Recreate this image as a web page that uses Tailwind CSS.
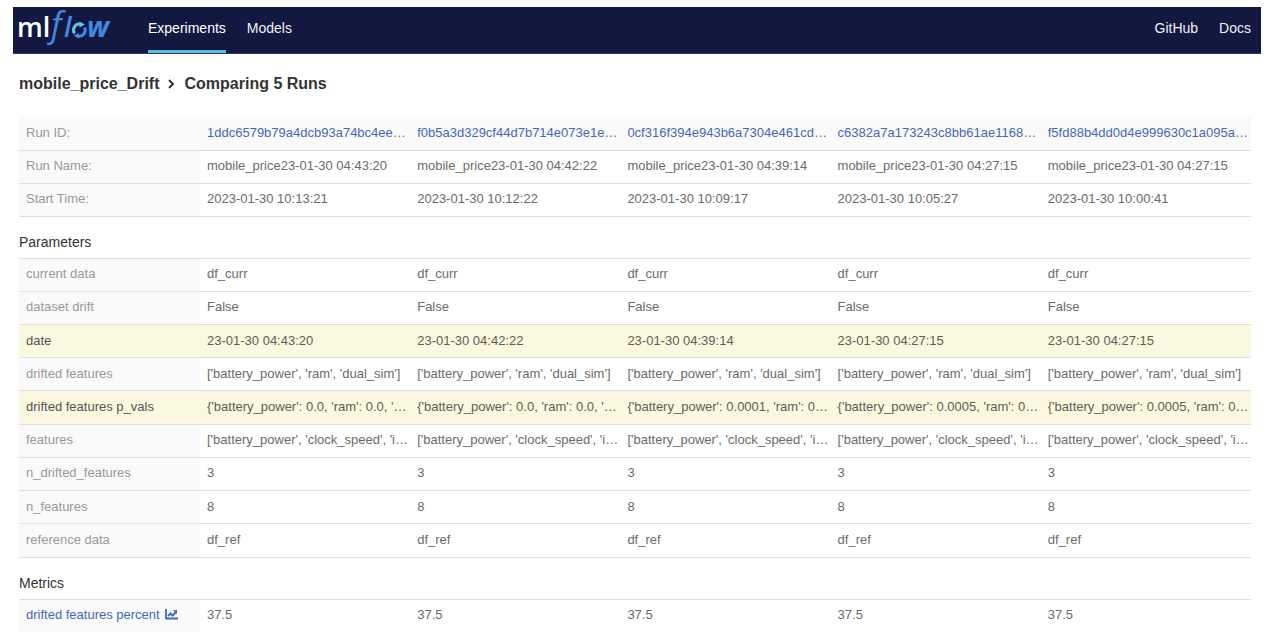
<!DOCTYPE html>
<html lang="en">
<head>
<meta charset="utf-8">
<meta name="viewport" content="width=device-width, initial-scale=1">
<title>Comparing 5 Runs - MLflow</title>
<script src="https://cdn.jsdelivr.net/npm/@tailwindcss/browser@4"></script>
</head>
<body class="bg-white pt-[7px] pl-[13px] pr-[19px] font-['Liberation_Sans',Arial,sans-serif] text-[13px] leading-5 text-[#6b6b6b]">
<header class="flex h-[47px] border-b border-[#34395c] bg-[#12183f] pl-1.5 pr-2.5 text-sm text-[#f0f0f4]">
  <a href="#" aria-label="mlflow" class="block w-[129px]">
    <svg class="overflow-visible" width="96" height="46" viewBox="0 0 96 46" aria-hidden="true">
      <g font-family="Open Sans, Noto Sans, sans-serif">
        <text x="-2" y="30" font-size="27" font-weight="600" fill="#ffffff">ml</text>
        <g fill="#4088e2" font-style="italic">
          <text x="32" y="30" font-size="34">f</text>
          <text x="45" y="30" font-size="27" font-weight="600">l</text>
          <text x="68" y="30" font-size="28" font-weight="700">w</text>
        </g>
      </g>
      <g fill="none" stroke-width="3">
        <path d="M55.500 26.500A6 6 0 0 1 61.500 17.200" stroke="#5bc5e5"/>
        <path d="M65.500 20.500A6 6 0 0 1 58.500 29" stroke="#4088e2"/>
      </g>
      <path d="M60.500 14.500l5.500 3-5.500 3z" fill="#5bc5e5"/>
      <path d="M60 31.500l-5.500-3 5-2.500z" fill="#4088e2"/>
    </svg>
  </a>
  <nav class="flex flex-1 gap-[21px]">
    <a href="#" class="border-b-[3px] border-[#55bfe8] pt-[11px] text-white">Experiments</a>
    <a href="#" class="pt-[11px]">Models</a>
    <a href="#" class="ml-auto pt-[11px]">GitHub</a>
    <a href="#" class="pt-[11px]">Docs</a>
  </nav>
</header>
<main class="pl-1.5 pr-2.5">
  <h1 class="flex items-center pt-5 pb-[23px] text-base leading-5 font-bold text-[#333]">
    <a href="#">mobile_price_Drift</a>
    <svg class="mx-[9px] w-[7px]" height="10" viewBox="0 0 7 10" fill="none" stroke="#333" stroke-width="2" aria-hidden="true"><path d="M1 1l4 4-4 4"/></svg>
    <span>Comparing 5 Runs</span>
  </h1>
  <table id="runs" class="h-[99px] w-full table-fixed border-collapse text-left"></table>
  <h2 class="pt-4 pb-[7px] text-sm leading-[18px] text-[#333]">Parameters</h2>
  <table id="params" class="h-[300px] w-full table-fixed border-collapse border-t border-[#e0e0e0] text-left"></table>
  <h2 class="pt-4 pb-[7px] text-sm leading-[18px] text-[#333]">Metrics</h2>
  <table id="metrics" class="w-full table-fixed border-collapse border-t border-[#e0e0e0] text-left"></table>
</main>
<script>
const same = v => [v, v, v, v, v];
const runs = [
  ['Run ID:', ['1ddc6579b79a4dcb93a74bc4ee…', 'f0b5a3d329cf44d7b714e073e1e…', '0cf316f394e943b6a7304e461cd…', 'c6382a7a173243c8bb61ae1168…', 'f5fd88b4dd0d4e999630c1a095a…'], 'id'],
  ['Run Name:', ['mobile_price23-01-30 04:43:20', 'mobile_price23-01-30 04:42:22', 'mobile_price23-01-30 04:39:14', 'mobile_price23-01-30 04:27:15', 'mobile_price23-01-30 04:27:15']],
  ['Start Time:', ['2023-01-30 10:13:21', '2023-01-30 10:12:22', '2023-01-30 10:09:17', '2023-01-30 10:05:27', '2023-01-30 10:00:41']]
];
const params = [
  ['current data', same('df_curr')],
  ['dataset drift', same('False')],
  ['date', ['23-01-30 04:43:20', '23-01-30 04:42:22', '23-01-30 04:39:14', '23-01-30 04:27:15', '23-01-30 04:27:15'], 'diff'],
  ['drifted features', same("['battery_power', 'ram', 'dual_sim']")],
  ['drifted features p_vals', ["{'battery_power': 0.0, 'ram': 0.0, '…", "{'battery_power': 0.0, 'ram': 0.0, '…", "{'battery_power': 0.0001, 'ram': 0…", "{'battery_power': 0.0005, 'ram': 0…", "{'battery_power': 0.0005, 'ram': 0…"], 'diff'],
  ['features', same("['battery_power', 'clock_speed', 'i…")],
  ['n_drifted_features', same('3')],
  ['n_features', same('8')],
  ['reference data', same('df_ref')]
];
const metrics = [['drifted features percent', same('37.5'), 'metric']];
const chart = '<svg class="ml-[5px] inline-block align-[-1px]" width="13" height="11" viewBox="0 0 13 11" fill="none" stroke="currentColor" aria-hidden="true"><path d="M1 0v9.500h12" stroke-width="1.800"/><path d="M3 7l2.500-2.500 2 2L11 3" stroke-width="2"/><path d="M8 1h4v4z" fill="currentColor" stroke="none"/></svg>';
const row = ([label, values, kind]) => {
  const tr = kind === 'diff' ? 'bg-[#faf8df] text-[#5f5f55]' : kind === 'id' ? 'bg-[#fafafa]' : '';
  const th = kind === 'diff' ? 'text-[#555]' : 'bg-[#fafafa] text-[#999]';
  const border = kind === 'metric' ? '' : 'border-b border-[#e0e0e0]';
  const name = kind === 'metric' ? `<a href="#" class="text-[#4568bd]">${label}${chart}</a>` : label;
  const cell = v => kind === 'id' ? `<a href="#" class="text-[#4568bd]">${v.slice(0, -1)}</a>…` : v;
  return `<tr class="h-[33px] ${border} ${tr}"><th scope="row" class="w-[181px] pl-[7px] pb-px font-normal whitespace-nowrap ${th}">${name}</th>${values.map(v => `<td class="pl-[7px] pb-px whitespace-nowrap">${cell(v)}</td>`).join('')}</tr>`;
};
for (const [id, rows] of Object.entries({ runs, params, metrics }))
  document.getElementById(id).innerHTML = `<tbody>${rows.map(row).join('')}</tbody>`;
</script>
</body>
</html>
